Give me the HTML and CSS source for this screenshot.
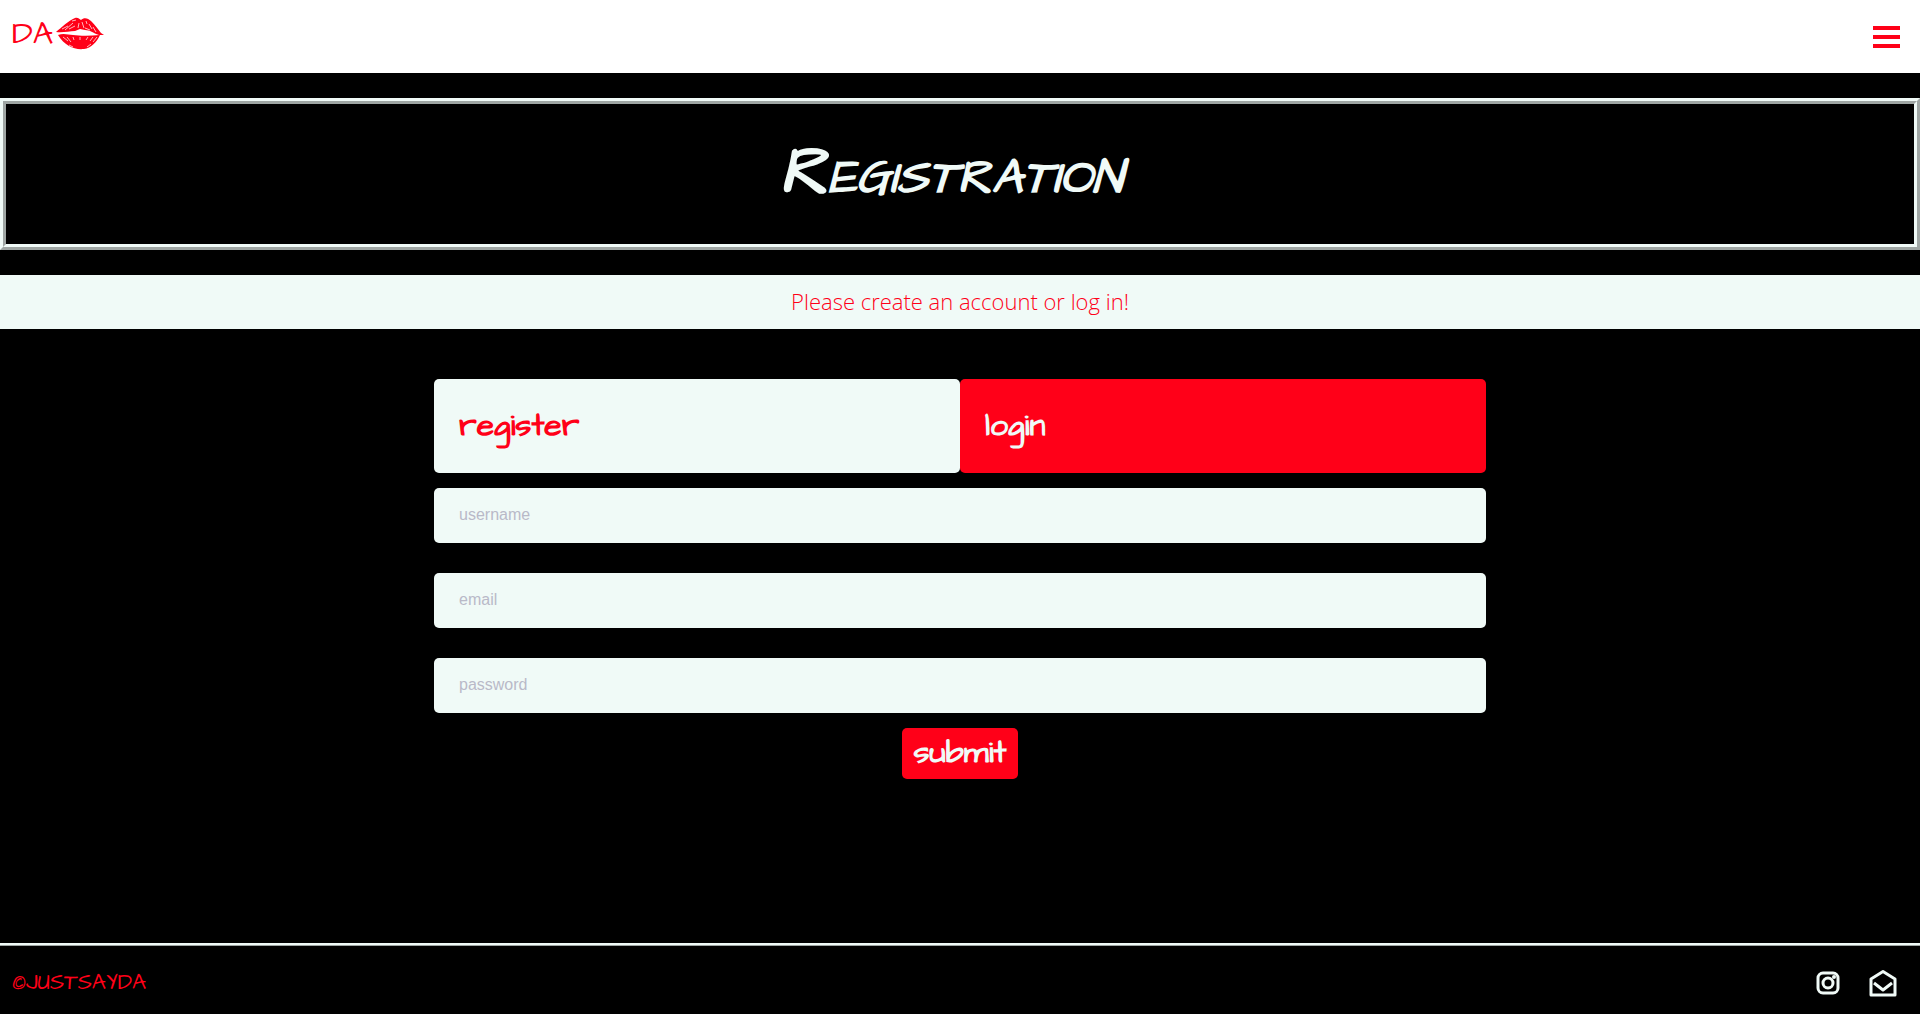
FILE: index.html
```html
<!DOCTYPE html>
<html lang="en">
<head>
  <meta charset="utf-8">
  <meta name="viewport" content="width=device-width, initial-scale=1">
  <title>Registration</title>
  <link rel="stylesheet" href="styles.css">
</head>
<body>
  <div class="page">
    <header class="header">
      <a class="logo" href="#">
        <span>DA</span>
        <svg class="lips" viewBox="0 0 50 34" aria-hidden="true">
          <path class="lip" d="M1 15 C7 10 13 4 20 1 C23 0 24 2 26 3 C29 0 33 1 36 4 C40 8 43 12 46 16 L49 18 L44 18 C38 16 35 13 30 13 L25 12 L20 14 C14 14 8 16 1 15Z"/>
          <path class="lip" d="M3 18 C9 16 13 18 18 18 C25 19 35 19 45 18 C42 25 36 31 29 32 C19 33 10 29 3 18Z"/>
          <path class="crease" d="M7 12L13 9M10 13L18 6M14 12L20 9M17 4L21 3M23 11L24 6M27 5L29 11M31 4L32 7M34 7L37 12M38 10L41 15M30 11L35 13M8 20L13 24M12 20L16 25M18 20L19 23M25 20L25 23M33 20L31 23M38 20L35 24M42 20L38 25M14 28L18 30M32 30L36 27"/>
        </svg>
      </a>
      <button class="menu" type="button" aria-label="Menu">
        <svg viewBox="0 0 27 22" aria-hidden="true">
          <path d="M0 0h27v4H0zM0 9h27v4H0zM0 18h27v4H0z"/>
        </svg>
      </button>
    </header>

    <main class="main">
      <h1 class="title">Registration</h1>
      <p class="notice">Please create an account or log in!</p>
      <form class="form">
        <div class="tabs">
          <button class="tab" type="button">register</button>
          <button class="tab tab-login" type="button">login</button>
        </div>
        <div class="fields">
          <input class="field" type="text" placeholder="username" aria-label="username">
          <input class="field" type="email" placeholder="email" aria-label="email">
          <input class="field" type="password" placeholder="password" aria-label="password">
        </div>
        <button class="submit" type="submit">submit</button>
      </form>
    </main>

    <footer class="footer">
      <a class="copyright" href="#">©JUSTSAYDA</a>
      <nav class="social">
        <a href="#" aria-label="Instagram">
          <svg class="instagram" viewBox="0 0 24 24" aria-hidden="true">
            <rect x="2" y="2" width="20" height="20" rx="5"/>
            <circle cx="12" cy="12" r="5"/>
            <circle class="dot" cx="18" cy="6" r="2"/>
          </svg>
        </a>
        <a href="#" aria-label="Email">
          <svg class="envelope" viewBox="0 0 28 28" aria-hidden="true">
            <path d="M2 10L14 2.500L26 10V26H2ZM5 14L14 21L23 14"/>
          </svg>
        </a>
      </nav>
    </footer>
  </div>
</body>
</html>
```

FILE: styles.css
```css
* {
  box-sizing: border-box;
}

body {
  margin: 0;
  background: #fff;
  font-family: "Open Sans", sans-serif;
}

.page {
  display: flex;
  flex-direction: column;
  min-height: calc(100vh - 1px);
  background: #000;
}

.header {
  display: flex;
  align-items: center;
  justify-content: space-between;
  height: 73px;
  padding: 0 20px 0 12px;
  background: #fff;
}

.logo {
  display: flex;
  align-items: center;
  gap: 2px;
  padding-bottom: 6px;
  color: #ff0018;
  font: 32px/36px "Architects Daughter", Lato, sans-serif;
  text-decoration: none;
}

.lips {
  width: 50px;
  height: 34px;
}

.lip {
  fill: #ff0018;
}

.crease {
  fill: none;
  stroke: #fff;
  stroke-width: 0.9;
  opacity: 0.8;
}

.menu {
  padding: 0;
  border: 0;
  background: none;
}

.menu svg {
  display: block;
  width: 27px;
  height: 22px;
  fill: #ff0018;
}

.main {
  flex: 1;
}

.title {
  margin: 25px 0;
  padding: 38px 50px 42px 32px;
  border: 6px ridge #f0faf7;
  color: #f0faf7;
  font: italic small-caps 700 68px/60px "Rock Salt", "Architects Daughter", Lato, sans-serif;
  text-align: center;
}

.notice {
  margin: 0;
  padding: 11px 12px 13px;
  background: #f0faf7;
  color: #ff0018;
  font-size: 22px;
  font-weight: 300;
  line-height: 30px;
  text-align: center;
}

.form {
  display: flex;
  flex-direction: column;
  align-items: center;
  gap: 15px;
  max-width: 1052px;
  margin: 50px auto;
}

.tabs {
  display: flex;
  width: 100%;
}

.tab {
  flex: 1;
  height: 94px;
  padding: 0 25px;
  border: 0;
  border-radius: 5px;
  background: #f0faf7;
  color: #ff0018;
  font: 700 32px/40px "Architects Daughter", Lato, sans-serif;
  text-align: left;
}

.tab-login {
  background: #ff0018;
  color: #f0faf7;
}

.fields {
  display: flex;
  flex-direction: column;
  gap: 30px;
  width: 100%;
}

.field {
  width: 100%;
  height: 55px;
  padding: 0 25px 2px;
  border: 0;
  border-radius: 5px;
  background: #f0faf7;
  font: 16px/20px "Liberation Sans", Arial, sans-serif;
}

.field::placeholder {
  color: #b9b9c8;
}

.submit {
  padding: 5px 12px 6px;
  border: 0;
  border-radius: 5px;
  background: #ff0018;
  color: #f0faf7;
  font: 700 32px/40px "Architects Daughter", Lato, sans-serif;
}

.footer {
  display: flex;
  align-items: center;
  justify-content: space-between;
  height: 71px;
  padding: 5px 23px 0 12px;
  border-top: 3px ridge #f0faf7;
}

.copyright {
  color: #ff0018;
  font: 22px/28px "Architects Daughter", Lato, sans-serif;
  text-decoration: none;
}

.social {
  display: flex;
  align-items: center;
  gap: 29px;
}

.social svg {
  display: block;
  fill: none;
  stroke: #f0faf7;
  stroke-width: 3;
}

.instagram {
  width: 24px;
  height: 24px;
}

.social .dot {
  fill: #f0faf7;
  stroke: none;
}

.envelope {
  width: 28px;
  height: 28px;
  stroke-linejoin: round;
}
```
